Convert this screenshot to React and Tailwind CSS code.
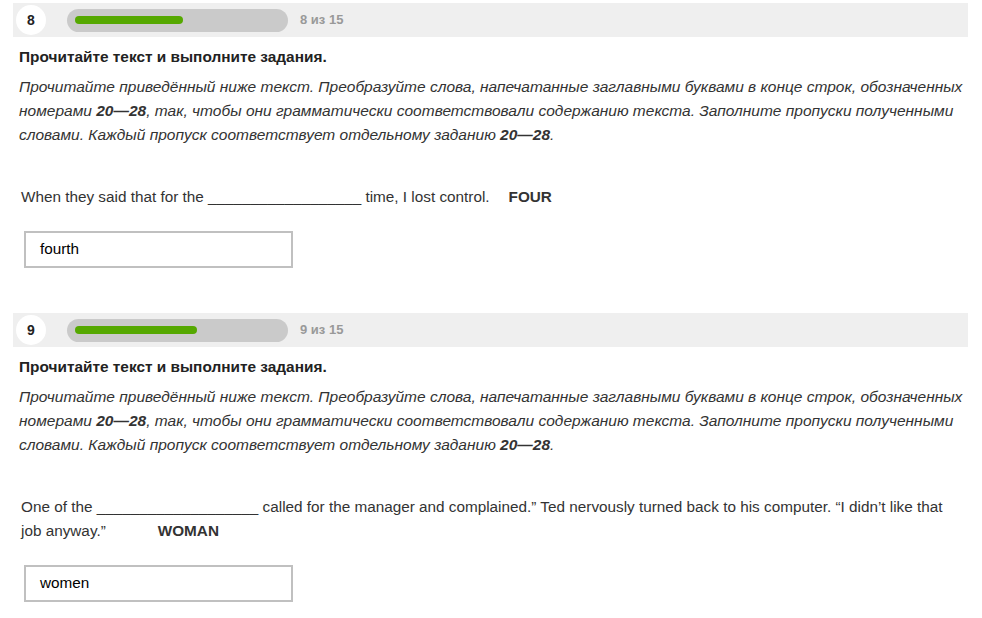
function Header({ num, pct }) {
  return (
    <div className="flex items-center h-[34px] bg-[#efefef] pl-[3px]">
      <div className="w-[30px] h-[30px] rounded-full bg-white flex items-center justify-center text-[14px] font-bold text-[#222]">
        {num}
      </div>
      <div className="ml-[21px] w-[221px] h-[23px] rounded-full bg-[#cacaca] flex items-center px-2">
        <div className="h-[8px] rounded-full bg-[#55a800]" style={{ width: pct }} />
      </div>
      <span className="ml-3 text-[13px] font-bold text-[#999]">{num} из 15</span>
    </div>
  )
}

function Task({ num, pct, children, answer }) {
  return (
    <div className="mb-[45px]">
      <Header num={num} pct={pct} />
      <div className="px-[6px]">
        <p className="mt-[9px] text-[15.4px] font-bold text-[#222] leading-[22px]">Прочитайте текст и выполните задания.</p>
        <p className="mt-[7px] text-[15.5px] italic text-[#333] leading-[24px] whitespace-nowrap">
          Прочитайте приведённый ниже текст. Преобразуйте слова, напечатанные заглавными буквами в конце строк, обозначенных<br />
          номерами <b>20—28</b>, так, чтобы они грамматически соответствовали содержанию текста. Заполните пропуски полученными<br />
          словами. Каждый пропуск соответствует отдельному заданию <b>20—28</b>.
        </p>
        <div className="mt-[38px] pl-[2px] text-[15.3px] text-[#333] leading-[24px]">{children}</div>
        <div className="mt-[22px] ml-[5px] w-[269px] h-[37px] border-2 border-[#c0c0c0] flex items-center px-[14px] text-[15.3px] text-black">
          {answer}
        </div>
      </div>
    </div>
  )
}

export default function App() {
  return (
    <div className="bg-white w-[982px] h-[618px] overflow-hidden pt-[3px] pl-[13px] pr-[14px]" style={{ fontFamily: '"Liberation Sans", Arial, sans-serif' }}>
      <Task num={8} pct={108} answer="fourth">
        When they said that for the __________________ time, I lost control.<span className="ml-[19px] font-bold">FOUR</span>
      </Task>
      <Task num={9} pct={122} answer="women">
        One of the ___________________ called for the manager and complained.” Ted nervously turned back to his computer. “I didn’t like that<br />
        job anyway.”
        <span className="ml-[52px] font-bold">WOMAN</span>
      </Task>
    </div>
  )
}
